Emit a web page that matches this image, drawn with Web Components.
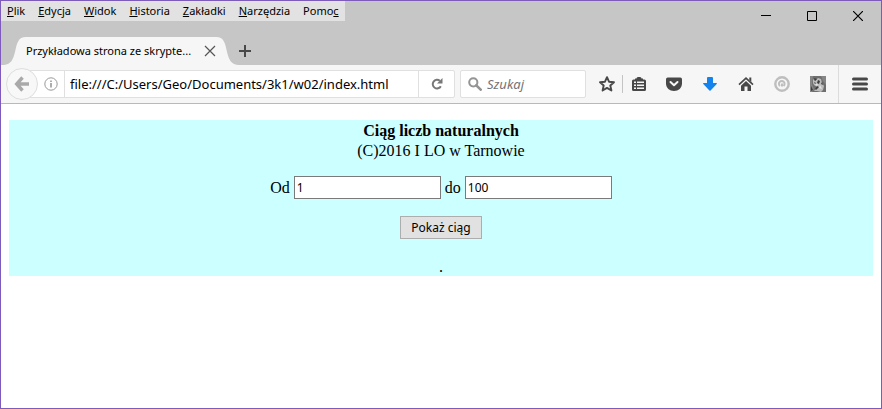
<!DOCTYPE html>
<html lang="pl">
<head>
<meta charset="utf-8">
<title>Przykładowa strona ze skryptem</title>
<style>
html, body { height: 100%; }
body { margin: 0; font-family: "Noto Sans", "Open Sans", sans-serif; font-size: 11px; color: #000; }
</style>
</head>
<body>
<browser-window>
  <title-bar slot="chrome">
    <menu-bar slot="menu"></menu-bar>
    <window-controls slot="controls"></window-controls>
  </title-bar>
  <tab-strip slot="chrome"><browser-tab>Przykładowa strona ze skrypte...</browser-tab></tab-strip>
  <nav-toolbar slot="chrome"></nav-toolbar>
  <number-page></number-page>
</browser-window>

<script>
function define(name, markup) {
  const template = document.createElement('template');
  template.innerHTML = '<style>*{box-sizing:border-box}button{font:inherit;color:inherit;background:none;border:0;padding:0;margin:0}svg{display:block}</style>' + markup;
  customElements.define(name, class extends HTMLElement {
    constructor() {
      super();
      this.attachShadow({ mode: 'open' }).append(template.content.cloneNode(true));
    }
  });
}

define('browser-window', `
<style>
:host { display: flex; flex-direction: column; box-sizing: border-box; min-height: 100%; border: 1px solid #7d5bbb; background: #fff; }
header { background: #c6c6c6; }
main { flex: 1; }
</style>
<header><slot name="chrome"></slot></header>
<main><slot></slot></main>`);

define('title-bar', `
<style>
:host { display: flex; justify-content: space-between; align-items: flex-start; height: 36px; }
</style>
<slot name="menu"></slot><slot name="controls"></slot>`);

define('menu-bar', `
<style>
:host { display: block; background: #e2e2e2; }
nav { display: flex; gap: 13px; padding: 0 6px; height: 20px; align-items: center; line-height: 20px; }
u { text-underline-offset: 1px; }
</style>
<nav>
<button><u>P</u>lik</button><button><u>E</u>dycja</button><button><u>W</u>idok</button><button><u>H</u>istoria</button><button><u>Z</u>akładki</button><button><u>N</u>arzędzia</button><button>Pomo<u>c</u></button>
</nav>`);

define('window-controls', `
<style>
:host { display: flex; }
button { width: 46px; height: 30px; display: grid; place-items: center; }
svg { fill: none; stroke: #000; }
</style>
<button aria-label="Minimalizuj"><svg width="10" height="10"><path d="M0 4.5H10"/></svg></button>
<button aria-label="Maksymalizuj"><svg width="10" height="10"><path d="M.5.5H9.5V9.5H.5Z"/></svg></button>
<button aria-label="Zamknij"><svg width="10" height="10"><path d="M0 0L10 10M10 0L0 10" stroke-width="1.2"/></svg></button>`);

define('tab-strip', `
<style>
:host { display: flex; align-items: center; gap: 1px; padding-left: 3px; height: 28px; }
button { width: 12px; height: 12px; }
</style>
<slot></slot>
<button aria-label="Nowa karta"><svg width="12" height="12" fill="none" stroke="#484848" stroke-width="2"><path d="M6 0V12M0 6H12"/></svg></button>`);

define('browser-tab', `
<style>
:host { display: flex; height: 28px; }
svg { fill: #f6f6f6; }
.body { display: flex; align-items: center; gap: 13px; background: #f6f6f6; line-height: 28px; white-space: nowrap; }
button { width: 12px; height: 12px; }
button svg { fill: none; stroke: #555; stroke-width: 1.2; }
</style>
<svg width="22" height="28"><path d="M0 28C7 27 9 23 11 15C13 6 14 0 22 0V28Z"/></svg>
<div class="body"><span><slot></slot></span><button aria-label="Zamknij kartę"><svg width="12" height="12"><path d="M1 1L11 11M11 1L1 11"/></svg></button></div>
<svg width="22" height="28"><path d="M22 28C15 27 13 23 11 15C9 6 8 0 0 0V28Z"/></svg>`);

define('nav-toolbar', `
<style>
:host { display: flex; align-items: center; height: 38px; padding: 0 0 0 5px; background: #f6f6f6; border-bottom: 1px solid #b9b9b9; }
button { flex: none; display: grid; place-items: center; }
.back { width: 32px; height: 32px; border: 1px solid #dedede; border-radius: 50%; background: #f8f8f8; position: relative; z-index: 1; }
.box { display: flex; align-items: center; height: 28px; background: #fff; border: 1px solid #e0e0e0; border-radius: 2px; min-width: 0; }
.url { flex: 1; margin-left: -16px; padding-left: 21px; }
.url .info { width: 14px; height: 26px; margin-right: 6px; }
.url input { border-left: 1px solid #e0e0e0; padding: 0 0 0 5px; }
.url .reload { width: 36px; height: 26px; border-left: 1px solid #e0e0e0; }
.search { width: 126px; flex: none; margin-left: 5px; padding-left: 7px; gap: 5px; }
.search svg { flex: none; }
input { flex: 1; min-width: 0; width: 0; height: 26px; border: 0; background: none; font: 13px "Noto Sans", "Open Sans", sans-serif; color: #000; outline: 0; margin: 0; padding: 0; }
input::placeholder { color: #737373; font-style: italic; opacity: 1; }
.tools { display: flex; flex: none; align-items: center; padding-left: 6px; }
.tools button { width: 36px; height: 36px; }
.tools .star { width: 31px; height: 18px; border-right: 1px solid #c4c4c4; }
.tools .list { width: 33px; padding-right: 2px; }
.tools .menu { width: 43px; height: 38px; border-left: 1px solid #dcdcdc; margin-left: 2px; }
</style>
<button class="back" aria-label="Wstecz"><svg width="16" height="16" fill="none" stroke="#a9a9a9" stroke-width="3.4"><path d="M8.5 1.5L2.7 8L8.5 14.5M3 8H15"/></svg></button>
<div class="box url">
  <button class="info" aria-label="Informacje o stronie"><svg width="14" height="14" fill="none" stroke="#999"><circle cx="7" cy="7" r="6.2"/><path d="M7 6V10.5M7 3.5V5" stroke-width="1.6"/></svg></button>
  <input aria-label="Adres" value="file:///C:/Users/Geo/Documents/3k1/w02/index.html">
  <button class="reload" aria-label="Odśwież"><svg width="12" height="12"><path d="M9.8 8.2A4.3 4.3 0 1 1 8.8 2.8" fill="none" stroke="#777" stroke-width="2"/><path d="M11.5 0V5.6H6Z" fill="#777"/></svg></button>
</div>
<div class="box search">
  <svg width="14" height="14" fill="none" stroke="#949494"><circle cx="5.3" cy="5.3" r="4.1" stroke-width="2"/><path d="M8.3 8.3L12.7 12.7" stroke-width="2.6" stroke-linecap="round"/></svg>
  <input aria-label="Szukaj" placeholder="Szukaj">
</div>
<div class="tools">
  <button class="star" aria-label="Dodaj zakładkę"><svg width="16" height="16"><path d="M8 1.2L10 5.700L15 6.200L11.300 9.500L12.400 14.500L8 11.900L3.600 14.500L4.700 9.500L1 6.200L6 5.700Z" fill="none" stroke="#484848" stroke-width="1.9" stroke-linejoin="round"/></svg></button>
  <button class="list" aria-label="Zakładki"><svg width="16" height="16"><path fill="#484848" fill-rule="evenodd" d="M4 3.500V2.500H5.500Q5.500 1 7 1H9Q10.500 1 10.500 2.500H12V3.500H13.500Q15 3.500 15 5V13.500Q15 15 13.500 15H2.500Q1 15 1 13.500V5Q1 3.500 2.500 3.500ZM3 5.500V7H5V5.500ZM6 5.500V7H13V5.500ZM3 8.500V10H5V8.500ZM6 8.500V10H13V8.500ZM3 11.500V13H5V11.500ZM6 11.500V13H13V11.500Z"/></svg></button>
  <button aria-label="Pocket"><svg width="16" height="16"><path d="M1.700 1.500H14.300Q16 1.500 16 3.200V7.500C16 12 12.500 15 8 15S0 12 0 7.500V3.200Q0 1.500 1.700 1.500Z" fill="#484848"/><path d="M4.500 6L8 9.300L11.500 6" fill="none" stroke="#f6f6f6" stroke-width="2" stroke-linecap="round" stroke-linejoin="round"/></svg></button>
  <button aria-label="Pobrane"><svg width="16" height="16"><path d="M5 2Q5 1 6 1H10Q11 1 11 2V7H14.300Q15.500 7 14.700 8L8.600 14.500Q8 15.100 7.400 14.500L1.300 8Q.5 7 1.700 7H5Z" fill="#1583ee"/></svg></button>
  <button aria-label="Strona startowa"><svg width="16" height="16"><path d="M1 8.700L8 2.200L15 8.700" fill="none" stroke="#484848" stroke-width="1.700"/><path d="M11.300 1.500H13.300V6L11.300 4ZM8 5L13 9.700V15H9.500V10.500H6.500V15H3V9.700Z" fill="#484848"/></svg></button>
  <button aria-label="Dodatek"><svg width="16" height="16" fill="none" stroke="#bebebe"><circle cx="8" cy="8" r="6.700" stroke-width="2.400"/><path d="M6 10A2.800 2.800 0 1 1 9.500 10M8 7.500V10.500" stroke-width="2"/></svg></button>
  <button aria-label="Greasemonkey"><svg width="16" height="16"><path fill="#6e6e6e" d="M0 0H16V16H0Z"/><path fill="#858585" d="M0 0H3L2 8L4 13L2 16H0ZM11 0H16V9L13 5Z"/><path fill="#bcbcbc" d="M3 3L5 5L8 2L11 3L12 7L14 10L13 14L11 16L7 15L4 15L7 11L4 9L3 7Z"/><path fill="#3c3c3c" d="M4 2L7 3L5 5ZM8 4L10 5L9 8L7 7ZM4 6L6 7L5 8ZM7 10L9 11L6 14L5 13ZM12 6L13 9L11 8ZM1 10L3 14L1 15Z"/><path fill="#e4e4e4" d="M5 8L8 8L7 10ZM10 9L12 13L9 12Z"/></svg></button>
  <button class="menu" aria-label="Otwórz menu"><svg width="16" height="14" stroke="#484848" stroke-width="3" stroke-linecap="round"><path d="M1.500 2H14.500M1.500 7H14.500M1.500 12H14.500"/></svg></button>
</div>`);

define('number-page', `
<style>
:host { display: block; padding: 16px 8px; font: 16px/20px "Liberation Serif", serif; }
section { background: #cff; text-align: center; padding-top: 1px; }
h1 { font-size: 16px; margin: 0; }
p { margin: 0; }
form { display: flex; flex-direction: column; align-items: center; gap: 17px; padding: 15px 0 19px; }
.row { display: flex; align-items: center; gap: 4px; line-height: 23px; }
input { width: 147px; height: 23px; border: 1px solid #7a7a7a; background: #fff; padding: 0 2px; font: 12px "Noto Sans", "Open Sans", sans-serif; }
button { height: 23px; padding: 0 10px; border: 1px solid #adadad; background: #e1e1e1; font: 12px/21px "Noto Sans", "Open Sans", sans-serif; }
output { display: block; line-height: 18px; }
</style>
<section>
  <h1>Ciąg liczb naturalnych</h1>
  <p>(C)2016 I LO w Tarnowie</p>
  <form onsubmit="return false">
    <div class="row"><label for="from">Od</label><input id="from" value="1"><label for="to">do</label><input id="to" value="100"></div>
    <button>Pokaż ciąg</button>
  </form>
  <output>.</output>
</section>`);
</script>
</body>
</html>
